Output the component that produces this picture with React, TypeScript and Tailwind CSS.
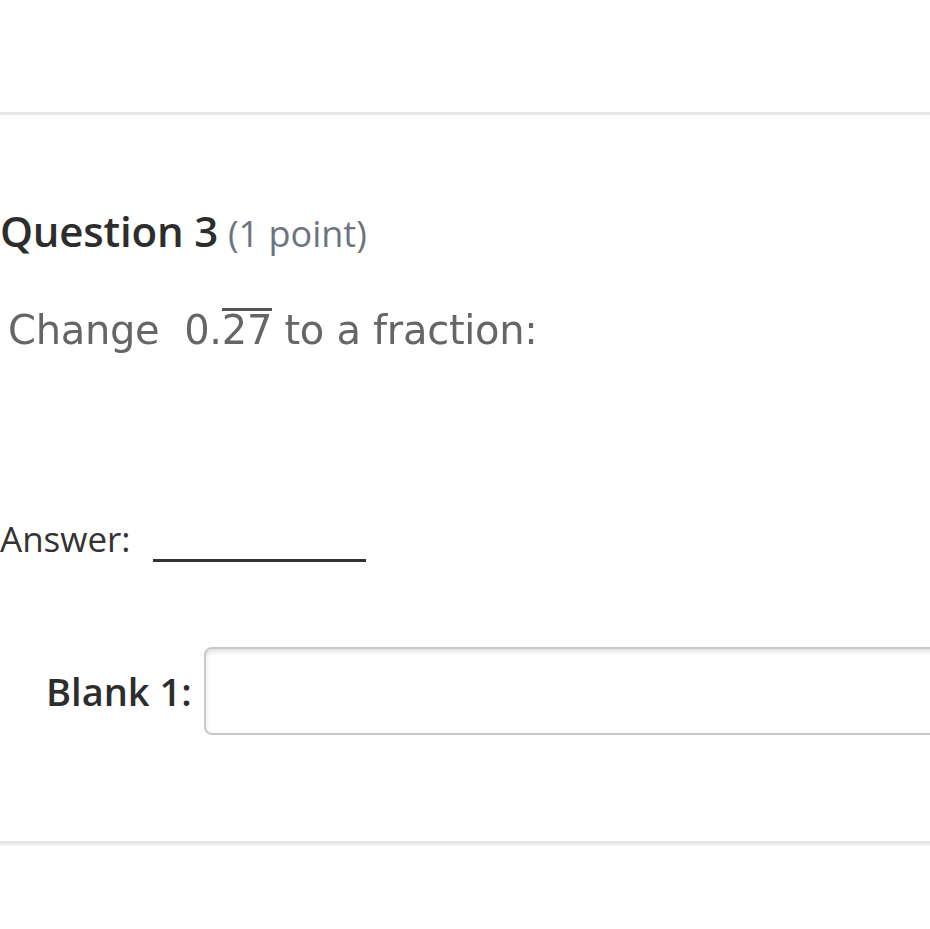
import React from 'react';

const sans = { fontFamily: '"Open Sans", "Liberation Sans", sans-serif' };

export default function App() {
  return (
    <div className="w-[930px] h-[929px] overflow-hidden bg-white text-[#333]" style={sans}>
      <div className="h-[112px]" />
      <div className="h-[3px] bg-[#e6e6e6]" />

      <div className="h-[92px]" />
      <h2 className="flex items-baseline h-[48px] leading-[48px] whitespace-nowrap">
        <span className="text-[42px] font-semibold text-[#2d2d2d] tracking-[-0.2px]">Question 3</span>
        <span className="ml-[10px] text-[36px] text-[#6b7580]">(1 point)</span>
      </h2>

      <div className="h-[50px]" />
      <p
        className="ml-[8px] h-[50px] leading-[50px] text-[40px] text-[#666] whitespace-nowrap blur-[0.6px]"
        style={{ fontFamily: '"DejaVu Sans", sans-serif', letterSpacing: '-0.3px' }}
      >
        Change&nbsp; 0.<span className="border-t-[3px] border-[#555] leading-[38px] inline-block">27</span> to a fraction:
      </p>

      <div className="h-[160px]" />
      <div className="flex items-end h-[48px] whitespace-nowrap">
        <span className="text-[35px] leading-[48px]">Answer:</span>
        <span className="ml-[22px] mb-[1px] w-[213px] h-[3px] bg-[#333]" />
      </div>

      <div className="h-[84px]" />
      <div className="flex items-center h-[88px] whitespace-nowrap">
        <label className="ml-[46px] text-[38px] font-semibold text-[#2d2d2d]">Blank 1:</label>
        <input
          type="text"
          className="ml-[12px] w-[760px] h-[88px] shrink-0 rounded-[8px] border-2 border-[#c8c8c8] bg-white shadow-[inset_0_3px_4px_rgba(0,0,0,0.12)] outline-none"
        />
      </div>

      <div className="h-[106px]" />
      <div className="h-[3px] bg-[#e6e6e6]" />
      <div className="h-[2px] bg-[#f4f4f4]" />
    </div>
  );
}
